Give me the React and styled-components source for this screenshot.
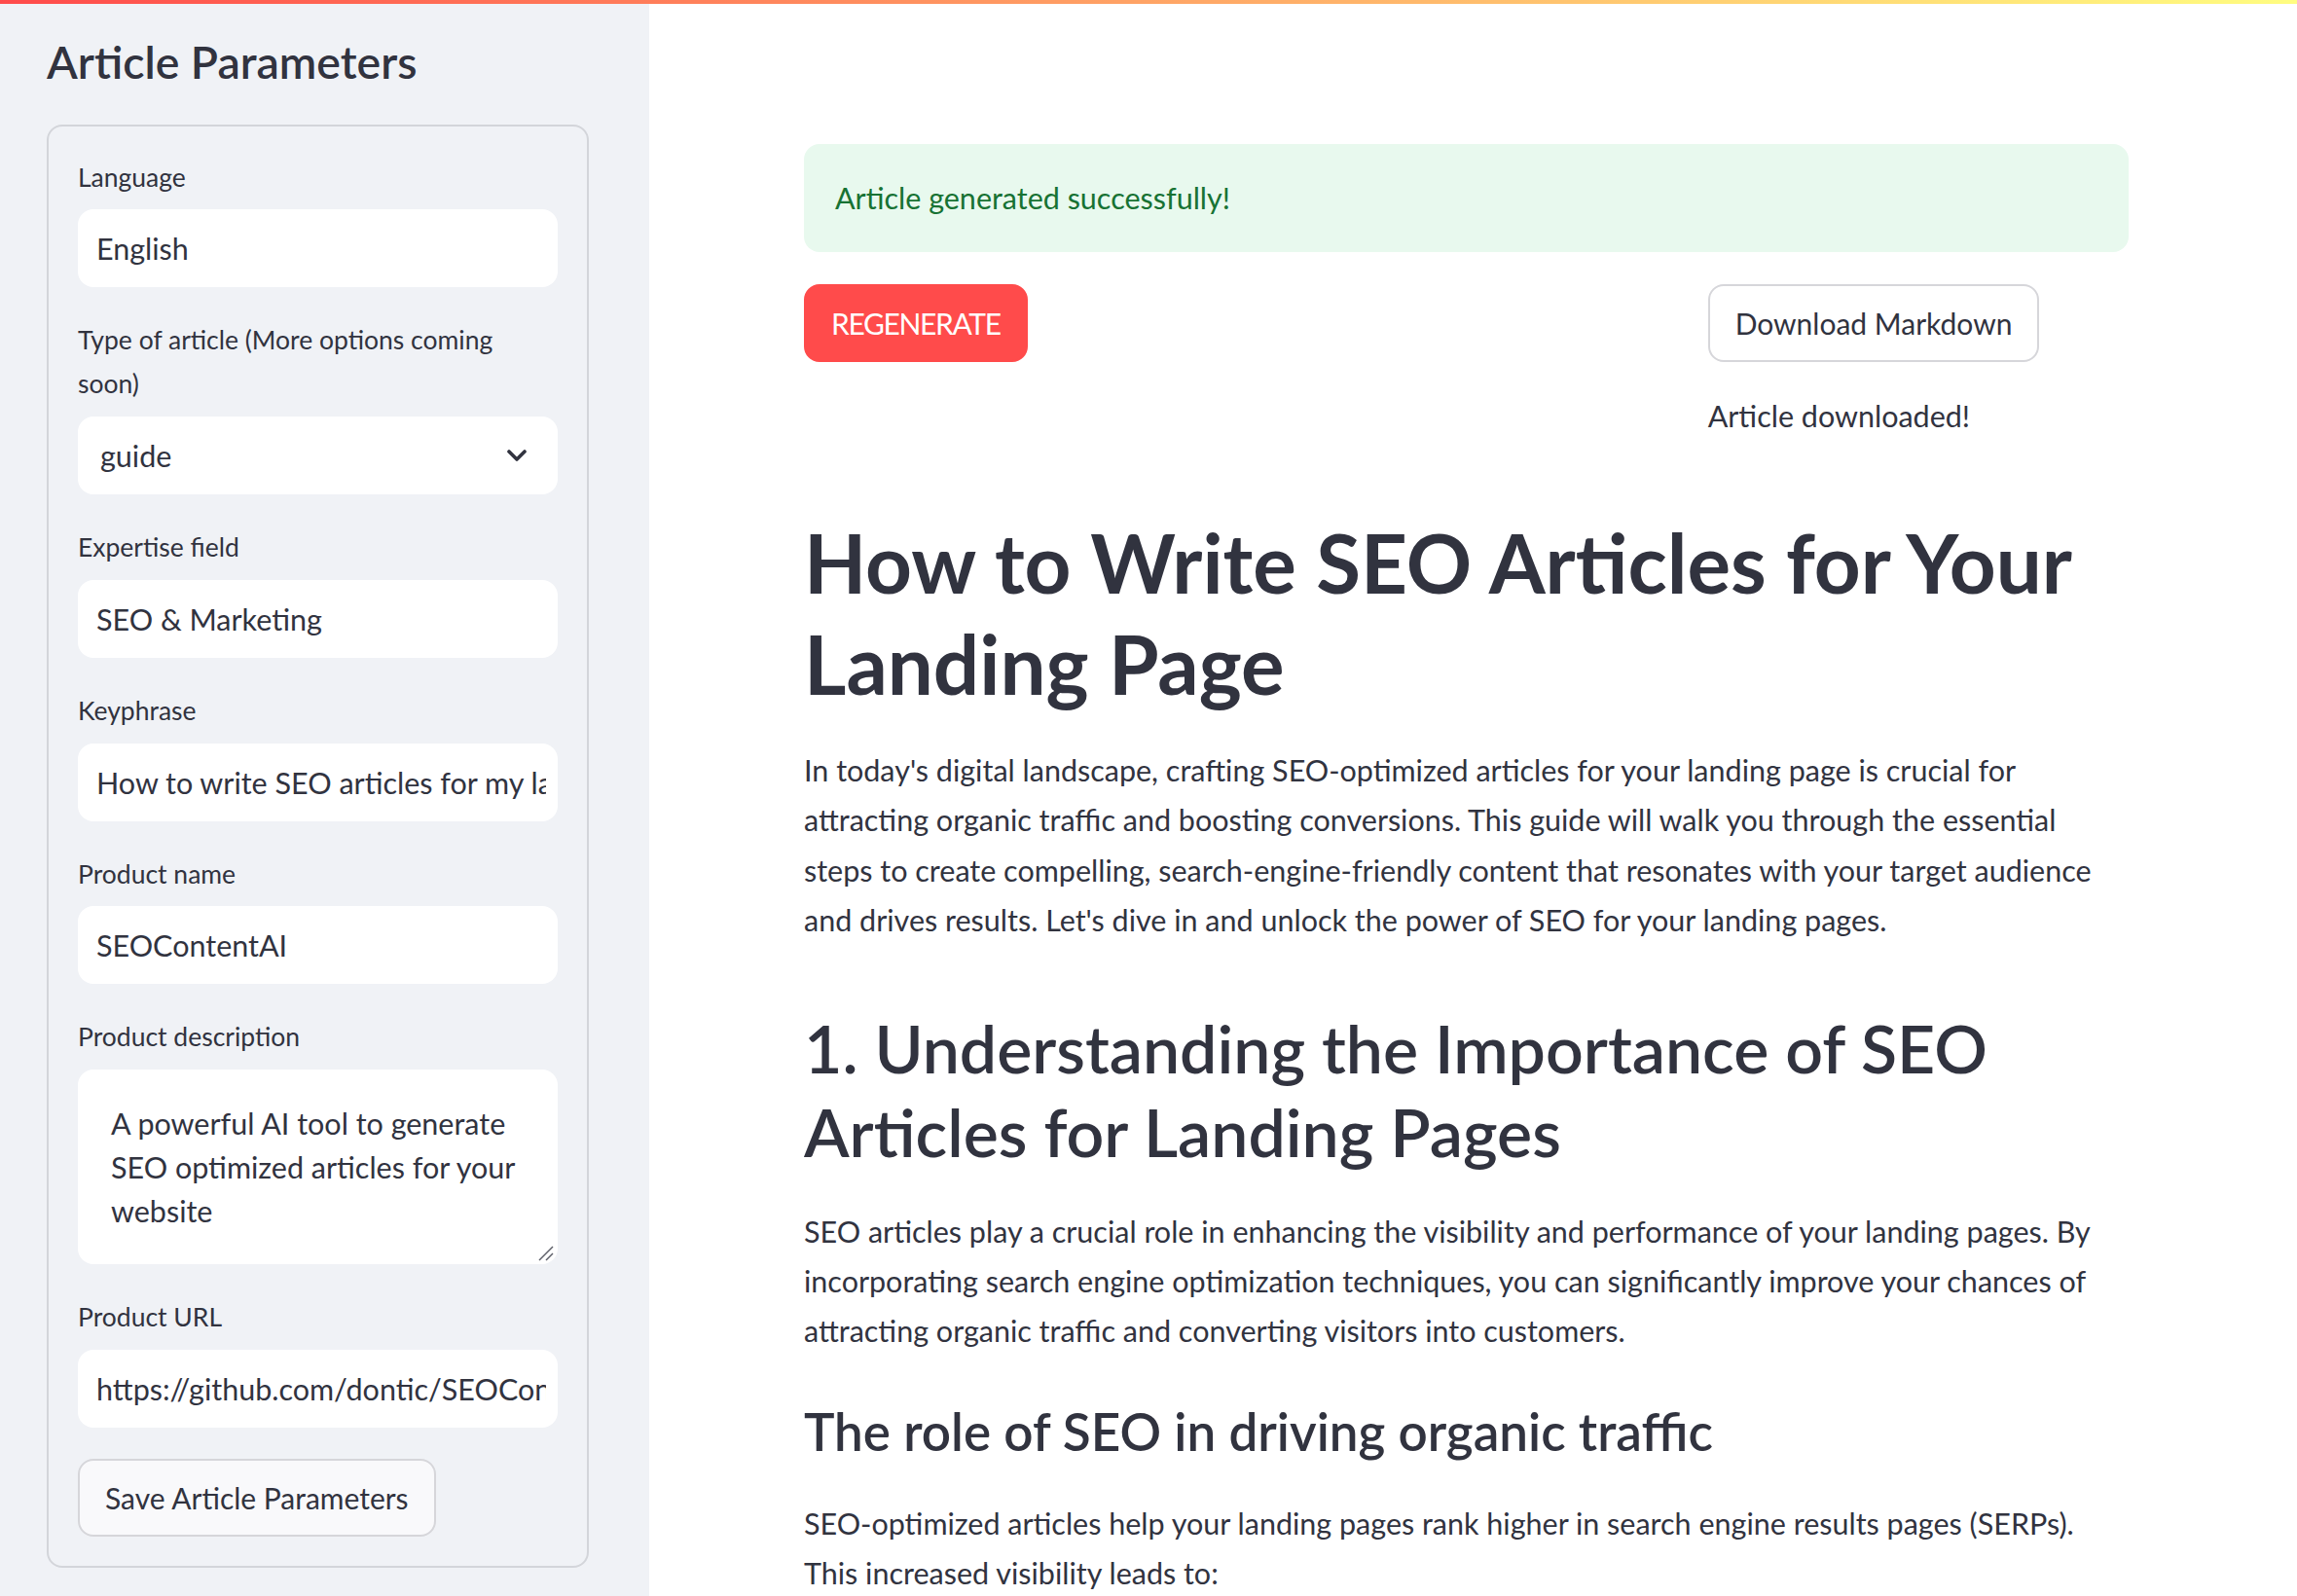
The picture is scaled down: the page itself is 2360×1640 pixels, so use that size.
import React from "react";
import styled, { createGlobalStyle } from "styled-components";

const GlobalStyle = createGlobalStyle`
  html, body {
    margin: 0;
    padding: 0;
    height: 1640px;
    overflow: hidden;
    background: #ffffff;
  }
  body {
    font-family: "Source Sans Pro", Lato, "Noto Sans", sans-serif;
    color: #31333f;
    -webkit-font-smoothing: antialiased;
  }
  * { box-sizing: border-box; }
`;

const Decoration = styled.div`
  position: fixed;
  top: 0;
  left: 0;
  right: 0;
  height: 4px;
  z-index: 10;
  background: linear-gradient(90deg, rgb(255, 75, 75), rgb(255, 253, 128));
`;

const Shell = styled.div`
  display: flex;
  height: 1640px;
`;

const Sidebar = styled.aside`
  flex: 0 0 667px;
  background: #f0f2f6;
  padding: 35px 62px 0 48px;
  display: flex;
  flex-direction: column;
`;

const SidebarTitle = styled.h2`
  margin: 0 0 35px 0;
  font-size: 46.4px;
  line-height: 57.6px;
  font-weight: 600;
  color: #31333f;
`;

const FormBox = styled.form`
  border: 2px solid #d3d5da;
  border-radius: 16px;
  padding: 30px;
  display: flex;
  flex-direction: column;
  gap: 32px;
`;

const Field = styled.div`
  display: flex;
  flex-direction: column;
`;

const Label = styled.label`
  font-size: 26.5px;
  line-height: 44.8px;
  margin-bottom: 11px;
  color: #31333f;
`;

const TextInput = styled.input`
  height: 80px;
  width: 100%;
  border: none;
  outline: none;
  border-radius: 16px;
  background: #ffffff;
  padding: 0 12px 0 19px;
  font-family: inherit;
  font-size: 30.5px;
  color: #31333f;
`;

const SelectBox = styled.div`
  height: 80px;
  border-radius: 16px;
  background: #ffffff;
  display: flex;
  align-items: center;
  justify-content: space-between;
  padding: 0 32px 0 23px;
  font-size: 30.5px;
  color: #31333f;
`;

const AreaWrap = styled.div`
  position: relative;
  height: 200px;
`;

const TextArea = styled.textarea`
  display: block;
  height: 200px;
  width: 100%;
  border: none;
  outline: none;
  border-radius: 16px;
  background: #ffffff;
  padding: 33px 34px;
  font-family: inherit;
  font-size: 30.5px;
  line-height: 44.8px;
  color: #31333f;
  resize: none;
`;

const ResizeHandle = styled.svg`
  position: absolute;
  right: 4px;
  bottom: 3px;
  pointer-events: none;
`;

const Button = styled.button`
  height: 80px;
  padding: 0 26px;
  border-radius: 16px;
  font-family: inherit;
  font-size: 30px;
  cursor: pointer;
  align-self: flex-start;
  letter-spacing: ${(p) => (p.$primary ? "-0.045em" : "0")};
  border: 2px solid ${(p) => (p.$primary ? "#ff4b4b" : "#d6d6da")};
  background: ${(p) => (p.$primary ? "#ff4b4b" : p.$muted ? "#f9f9fb" : "#ffffff")};
  color: ${(p) => (p.$primary ? "#ffffff" : "#31333f")};
`;

const Main = styled.main`
  flex: 1;
  padding: 148px 0 0 159px;
`;

const Content = styled.div`
  width: 1361px;
  display: flex;
  flex-direction: column;
`;

const SuccessBox = styled.div`
  background: #e8f9ee;
  color: #177233;
  border-radius: 16px;
  padding: 30px 32px;
  font-size: 30.5px;
  line-height: 51px;
`;

const Columns = styled.div`
  margin-top: 33px;
  display: grid;
  grid-template-columns: repeat(3, 1fr);
  gap: 32px;
`;

const Column = styled.div`
  display: flex;
  flex-direction: column;
  gap: 30px;
`;

const Para = styled.p`
  margin: 0;
  font-size: 30.5px;
  line-height: 51.2px;
  color: #31333f;
  white-space: nowrap;
`;

const H1 = styled.h1`
  margin: 73px 0 32px 0;
  font-size: 83.5px;
  line-height: 104px;
  font-weight: 700;
  color: #31333f;
  white-space: nowrap;
`;

const H2 = styled.h2`
  margin: 63px 0 33px 0;
  font-size: 68px;
  line-height: 86.4px;
  font-weight: 600;
  color: #31333f;
  white-space: nowrap;
`;

const H3 = styled.h3`
  margin: 44px 0 35px 0;
  font-size: 53px;
  line-height: 67.2px;
  font-weight: 600;
  color: #31333f;
  white-space: nowrap;
`;

const Chevron = () => (
  <svg width="20" height="12" viewBox="0 0 20 12" fill="none">
    <polyline
      points="2,2 10,10 18,2"
      stroke="#31333f"
      strokeWidth="3.6"
      strokeLinecap="round"
      strokeLinejoin="round"
    />
  </svg>
);

const fields = [
  { label: "Expertise field", value: "SEO & Marketing" },
  { label: "Keyphrase", value: "How to write SEO articles for my landing page" },
  { label: "Product name", value: "SEOContentAI" },
];

export default function App() {
  return (
    <>
      <GlobalStyle />
      <Decoration />
      <Shell>
        <Sidebar>
          <SidebarTitle>Article Parameters</SidebarTitle>
          <FormBox onSubmit={(e) => e.preventDefault()}>
            <Field>
              <Label>Language</Label>
              <TextInput readOnly value="English" />
            </Field>
            <Field>
              <Label>
                Type of article (More options coming
                <br />
                soon)
              </Label>
              <SelectBox>
                <span>guide</span>
                <Chevron />
              </SelectBox>
            </Field>
            {fields.map((f) => (
              <Field key={f.label}>
                <Label>{f.label}</Label>
                <TextInput readOnly value={f.value} />
              </Field>
            ))}
            <Field>
              <Label>Product description</Label>
              <AreaWrap>
                <TextArea
                  readOnly
                  value="A powerful AI tool to generate SEO optimized articles for your website"
                />
                <ResizeHandle width="16" height="16" viewBox="0 0 16 16">
                  <line x1="15" y1="1" x2="1" y2="15" stroke="#5b5d66" strokeWidth="1.4" />
                  <line x1="15" y1="8" x2="8" y2="15" stroke="#5b5d66" strokeWidth="1.4" />
                </ResizeHandle>
              </AreaWrap>
            </Field>
            <Field>
              <Label>Product URL</Label>
              <TextInput readOnly value="https://github.com/dontic/SEOContentAI" />
            </Field>
            <Button type="button" $muted>
              Save Article Parameters
            </Button>
          </FormBox>
        </Sidebar>
        <Main>
          <Content>
            <SuccessBox>Article generated successfully!</SuccessBox>
            <Columns>
              <Column>
                <Button $primary>REGENERATE</Button>
              </Column>
              <Column />
              <Column>
                <Button>Download Markdown</Button>
                <Para>Article downloaded!</Para>
              </Column>
            </Columns>
            <H1>
              How to Write SEO Articles for Your
              <br />
              Landing Page
            </H1>
            <Para>
              In today's digital landscape, crafting SEO-optimized articles for your landing page is crucial for
              <br />
              attracting organic traffic and boosting conversions. This guide will walk you through the essential
              <br />
              steps to create compelling, search-engine-friendly content that resonates with your target audience
              <br />
              and drives results. Let's dive in and unlock the power of SEO for your landing pages.
            </Para>
            <H2>
              1. Understanding the Importance of SEO
              <br />
              Articles for Landing Pages
            </H2>
            <Para>
              SEO articles play a crucial role in enhancing the visibility and performance of your landing pages. By
              <br />
              incorporating search engine optimization techniques, you can significantly improve your chances of
              <br />
              attracting organic traffic and converting visitors into customers.
            </Para>
            <H3>The role of SEO in driving organic traffic</H3>
            <Para>
              SEO-optimized articles help your landing pages rank higher in search engine results pages (SERPs).
              <br />
              This increased visibility leads to:
            </Para>
          </Content>
        </Main>
      </Shell>
    </>
  );
}
